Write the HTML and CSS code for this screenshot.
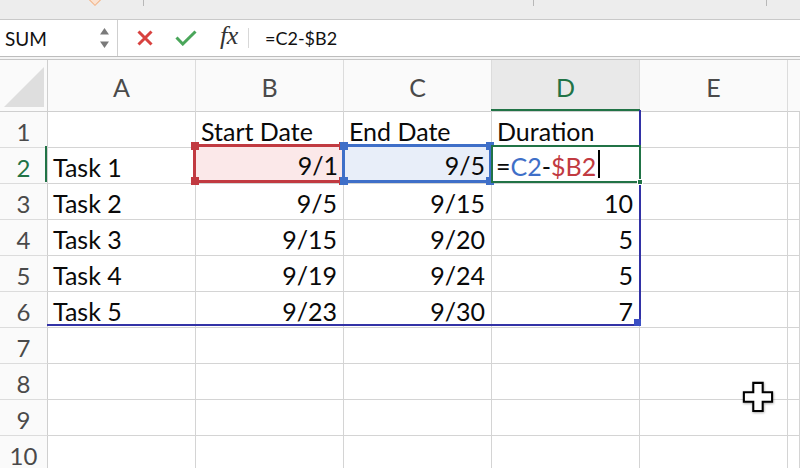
FILE: index.html
```html
<!DOCTYPE html>
<html>
<head>
<meta charset="utf-8">
<link rel="stylesheet" href="styles.css">
</head>
<body>
<div class="app">
  <div class="ribbon">
    <span class="rib-diamond"></span>
    <span class="rib-tick t1"></span>
    <span class="rib-tick t2"></span>
    <span class="rib-tick t3"></span>
  </div>
  <div class="fbar">
    <div class="namebox">
      <span class="nb-text">SUM</span>
      <span class="spinner">
        <svg width="11" height="22" viewBox="0 0 11 22"><path d="M5.5 1 L10 7.5 H1 Z" fill="#7a7a7a"/><path d="M5.5 21 L10 14.5 H1 Z" fill="#7a7a7a"/></svg>
      </span>
    </div>
    <div class="fb-icons">
      <svg class="ic-x" width="16" height="16" viewBox="0 0 16 16"><path d="M1.5 1.5 L14.5 14.5 M14.5 1.5 L1.5 14.5" stroke="#d8423f" stroke-width="3" stroke-linecap="butt"/></svg>
      <svg class="ic-ok" width="22" height="16" viewBox="0 0 22 16"><path d="M1.5 7.5 L7.8 14 L20.5 1.5" fill="none" stroke="#4aa65a" stroke-width="3"/></svg>
      <span class="fx">fx</span>
      <span class="fb-sep"></span>
    </div>
    <div class="fb-text">=C2-$B2</div>
  </div>
  <div class="sheet">
    <div class="grid">
      <div class="corner"><span class="tri"></span></div>
      <div class="ch">A</div><div class="ch">B</div><div class="ch">C</div><div class="ch ch-sel">D</div><div class="ch">E</div><div class="ch ch-last"></div>

      <div class="rh">1</div><div class="c"></div><div class="c">Start Date</div><div class="c">End Date</div><div class="c">Duration</div><div class="c"></div><div class="c"></div>
      <div class="rh rh-sel">2</div><div class="c">Task 1</div><div class="c"></div><div class="c"></div><div class="c"></div><div class="c"></div><div class="c"></div>
      <div class="rh">3</div><div class="c">Task 2</div><div class="c n">9/5</div><div class="c n">9/15</div><div class="c n">10</div><div class="c"></div><div class="c"></div>
      <div class="rh">4</div><div class="c">Task 3</div><div class="c n">9/15</div><div class="c n">9/20</div><div class="c n">5</div><div class="c"></div><div class="c"></div>
      <div class="rh">5</div><div class="c">Task 4</div><div class="c n">9/19</div><div class="c n">9/24</div><div class="c n">5</div><div class="c"></div><div class="c"></div>
      <div class="rh">6</div><div class="c">Task 5</div><div class="c n">9/23</div><div class="c n">9/30</div><div class="c n">7</div><div class="c"></div><div class="c"></div>
      <div class="rh">7</div><div class="c"></div><div class="c"></div><div class="c"></div><div class="c"></div><div class="c"></div><div class="c"></div>
      <div class="rh">8</div><div class="c"></div><div class="c"></div><div class="c"></div><div class="c"></div><div class="c"></div><div class="c"></div>
      <div class="rh">9</div><div class="c"></div><div class="c"></div><div class="c"></div><div class="c"></div><div class="c"></div><div class="c"></div>
      <div class="rh">10</div><div class="c"></div><div class="c"></div><div class="c"></div><div class="c"></div><div class="c"></div><div class="c"></div>
    </div>

    <div class="hl-colD"></div>
    <div class="hl-row2"></div>
    <div class="table-range"><span class="fill-h"></span></div>
    <div class="ref ref-red">
      <span class="txt">9/1</span>
      <i class="h tl"></i><i class="h tr"></i><i class="h bl"></i><i class="h br"></i>
    </div>
    <div class="ref ref-blue">
      <span class="txt">9/5</span>
      <i class="h tl"></i><i class="h tr"></i><i class="h bl"></i><i class="h br"></i>
    </div>
    <div class="active">
      <span class="edit">=<span class="r-blue">C2</span>-<span class="r-red">$B2</span><span class="caret"></span></span>
      <i class="ah"></i>
    </div>
    <svg class="pointer" width="36" height="36" viewBox="0 0 36 36">
      <defs><filter id="sh" x="-20%" y="-20%" width="140%" height="140%"><feDropShadow dx="0.5" dy="1" stdDeviation="1" flood-color="#000" flood-opacity="0.35"/></filter></defs>
      <path d="M12 2 H22 V12 H32 V22 H22 V32 H12 V22 H2 V12 H12 Z" fill="#ffffff" stroke="#000" stroke-width="2.2" stroke-linejoin="miter" transform="translate(1 1) scale(0.94)" filter="url(#sh)"/>
    </svg>
  </div>
</div>
</body>
</html>
```
FILE: styles.css
```css
* { box-sizing: border-box; }
html, body { margin: 0; padding: 0; background: #fff; }
body { width: 800px; height: 468px; overflow: hidden; font-family: Lato, "Liberation Sans", sans-serif; color: #000; }
.app { width: 800px; height: 468px; overflow: hidden; }

.ribbon { position: relative; height: 20px; background: #ededed; border-bottom: 1px solid #c9c9c9; }
.rib-tick { position: absolute; top: 0; width: 1px; height: 6px; background: #b8b8b8; }
.t1 { left: 143px; } .t2 { left: 533px; } .t3 { left: 766px; }
.rib-diamond { position: absolute; left: 90px; top: -6px; width: 10px; height: 10px; border: 1.5px solid #f0b48a; background: #fbe3d2; transform: rotate(45deg); }

.fbar { display: flex; align-items: stretch; height: 37px; background: #fff; border-bottom: 1px solid #bdbdbd; }
.namebox { width: 118px; border-right: 1px solid #cfcfcf; display: flex; align-items: center; justify-content: space-between; padding: 0 7px 0 5px; }
.nb-text { font-size: 19px; color: #111; }
.spinner { display: flex; align-items: center; }
.fb-icons { display: flex; align-items: center; width: 146px; padding-left: 19px; }
.ic-x { margin-right: 22px; }
.ic-ok { margin-right: 23px; }
.fx { font-family: "Liberation Serif", serif; font-style: italic; font-size: 26px; color: #333; margin-top: -4px; letter-spacing: -0.5px; }
.fb-sep { width: 1px; height: 20px; background: #d8d8d8; margin-left: 10px; }
.fb-text { display: flex; align-items: center; font-size: 18px; color: #111; padding-left: 1px; }

.sheet { position: relative; border-top: 2px solid #f4f4f4; }
.grid { display: grid; grid-template-columns: 48px repeat(5, 148px) 12px; grid-template-rows: 52px repeat(10, 36px); border-top: 1px solid #c6c6c6; }
.corner { border-right: 1px solid #cfcfcf; border-bottom: 1px solid #cfcfcf; background: #fafafa; position: relative; }
.tri { position: absolute; left: 4px; top: 7px; width: 40px; height: 40px; background: #dedede; clip-path: polygon(100% 0, 100% 100%, 0 100%); }
.ch { border-right: 1px solid #dcdcdc; border-bottom: 1px solid #cfcfcf; background: #fafafa; display: flex; align-items: center; justify-content: center; font-size: 25px; color: #4a4a4a; padding-top: 2px; }
.ch-sel { background: #e9e9e9; color: #217346; }
.ch-last { border-right: none; }
.rh { border-right: 1px solid #cfcfcf; border-bottom: 1px solid #dcdcdc; background: #fafafa; display: flex; align-items: center; justify-content: center; font-size: 24px; color: #4a4a4a; padding-top: 3px; }
.rh-sel { color: #217346; }
.c { border-right: 1px solid #d4d4d4; border-bottom: 1px solid #d4d4d4; font-size: 25px; padding: 4px 6px 0 5px; line-height: 30px; white-space: nowrap; overflow: visible; color: #0a0a0a; }
.c.n { text-align: right; }

.hl-colD { position: absolute; left: 491px; top: 50px; width: 149px; height: 2px; background: #217346; }
.hl-row2 { position: absolute; left: 45px; top: 87px; width: 2px; height: 36px; background: #217346; }
.table-range { position: absolute; left: 47px; top: 51px; width: 594px; height: 216px; border-right: 2px solid #3232a6; border-bottom: 2px solid #3232a6; }
.fill-h { position: absolute; right: -2px; bottom: -2px; width: 7px; height: 7px; background: #3b4fc4; }

.ref { position: absolute; top: 85px; height: 39px; border: 3px solid; font-size: 25px; display: flex; justify-content: flex-end; align-items: center; padding: 3px 4px 0 0; color: #0a0a0a; }
.ref-red { left: 193px; width: 152px; border-color: #c13a41; background: #fbe8e9; }
.ref-blue { left: 342px; width: 150px; border-color: #3f6fc8; background: #e8eef9; }
.h { position: absolute; width: 8px; height: 8px; }
.ref-red .h { background: #c13a41; }
.ref-blue .h { background: #3f6fc8; }
.tl { left: -5px; top: -5px; } .tr { right: -5px; top: -5px; } .bl { left: -5px; bottom: -5px; } .br { right: -5px; bottom: -5px; }

.active { position: absolute; left: 491px; top: 86px; width: 150px; height: 38px; border: 2px solid #217346; background: #fff; font-size: 25px; padding: 3px 0 0 3px; display: flex; align-items: center; color: #0a0a0a; }
.edit { white-space: nowrap; display: flex; align-items: center; }
.r-blue { color: #3f6fc8; }
.r-red { color: #c13a41; }
.caret { display: inline-block; width: 1.5px; height: 28px; background: #000; margin-left: 2px; margin-top: -3px; }
.ah { position: absolute; right: -4px; bottom: -4px; width: 6px; height: 6px; background: #217346; border: 1px solid #fff; }

.pointer { position: absolute; left: 741px; top: 321px; }
```
